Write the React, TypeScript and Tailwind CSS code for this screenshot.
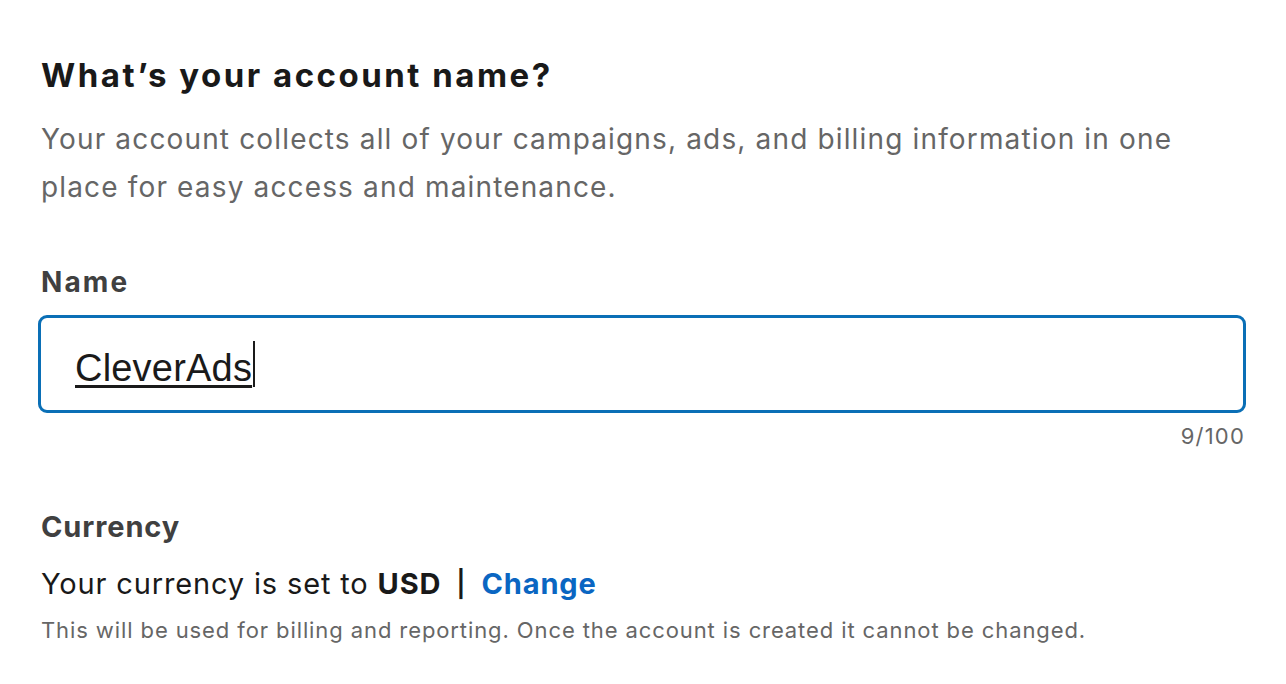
import React from 'react';

const App: React.FC = () => {
  return (
    <div className="min-h-screen w-full bg-white" style={{ fontFamily: 'Inter, "Noto Sans", sans-serif' }}>
      <div className="px-[41px] pt-[55px]">
        <h1 className="text-[33px] leading-[40px] font-bold text-[#191919] tracking-[2.5px]">What’s your account name?</h1>
        <p className="mt-[20px] text-[28px] leading-[48px] text-[#666666] tracking-[1.15px]">
          Your account collects all of your campaigns, ads, and billing information in one place for easy access and maintenance.
        </p>

        <label className="mt-[53px] block text-[28px] leading-[36px] font-bold text-[#404040] tracking-[2.1px]">Name</label>
        <div className="mt-[15px] -ml-[3px] -mr-[1px] h-[98px] rounded-[9px] border-[3px] border-[#0a6fb6]">
          <div className="pt-[23px] pl-[34px] flex items-start">
            <span
              className="mt-[7.5px] block text-[38px] leading-[38px] text-[#1a1a1a] underline decoration-[3px] underline-offset-[4px] tracking-[0.2px]"
              style={{ fontFamily: '"Liberation Sans", Arial, sans-serif' }}
            >
              CleverAds
            </span>
            <span className="ml-[1px] block w-[2px] h-[46px] bg-[#1a1a1a]" />
          </div>
        </div>
        <div className="mt-[9px] text-right text-[22px] leading-[28px] text-[#666666] tracking-[1.2px]">9/100</div>

        <div className="mt-[59px] text-[29px] leading-[36px] font-bold text-[#404040] tracking-[0.9px]">Currency</div>
        <div className="mt-[19px] text-[29px] leading-[40px] text-[#191919] tracking-[0.85px] flex items-center">
          <span className="whitespace-pre">Your currency is set to <span className="font-bold">USD</span></span>
          <span className="ml-[15px] mr-[15px] font-semibold text-[26px]">|</span>
          <a className="font-bold text-[#0a66c2]">Change</a>
        </div>
        <p className="mt-[12px] text-[22px] leading-[28px] text-[#666666] tracking-[0.9px]">
          This will be used for billing and reporting. Once the account is created it cannot be changed.
        </p>
      </div>
    </div>
  );
};

export default App;
